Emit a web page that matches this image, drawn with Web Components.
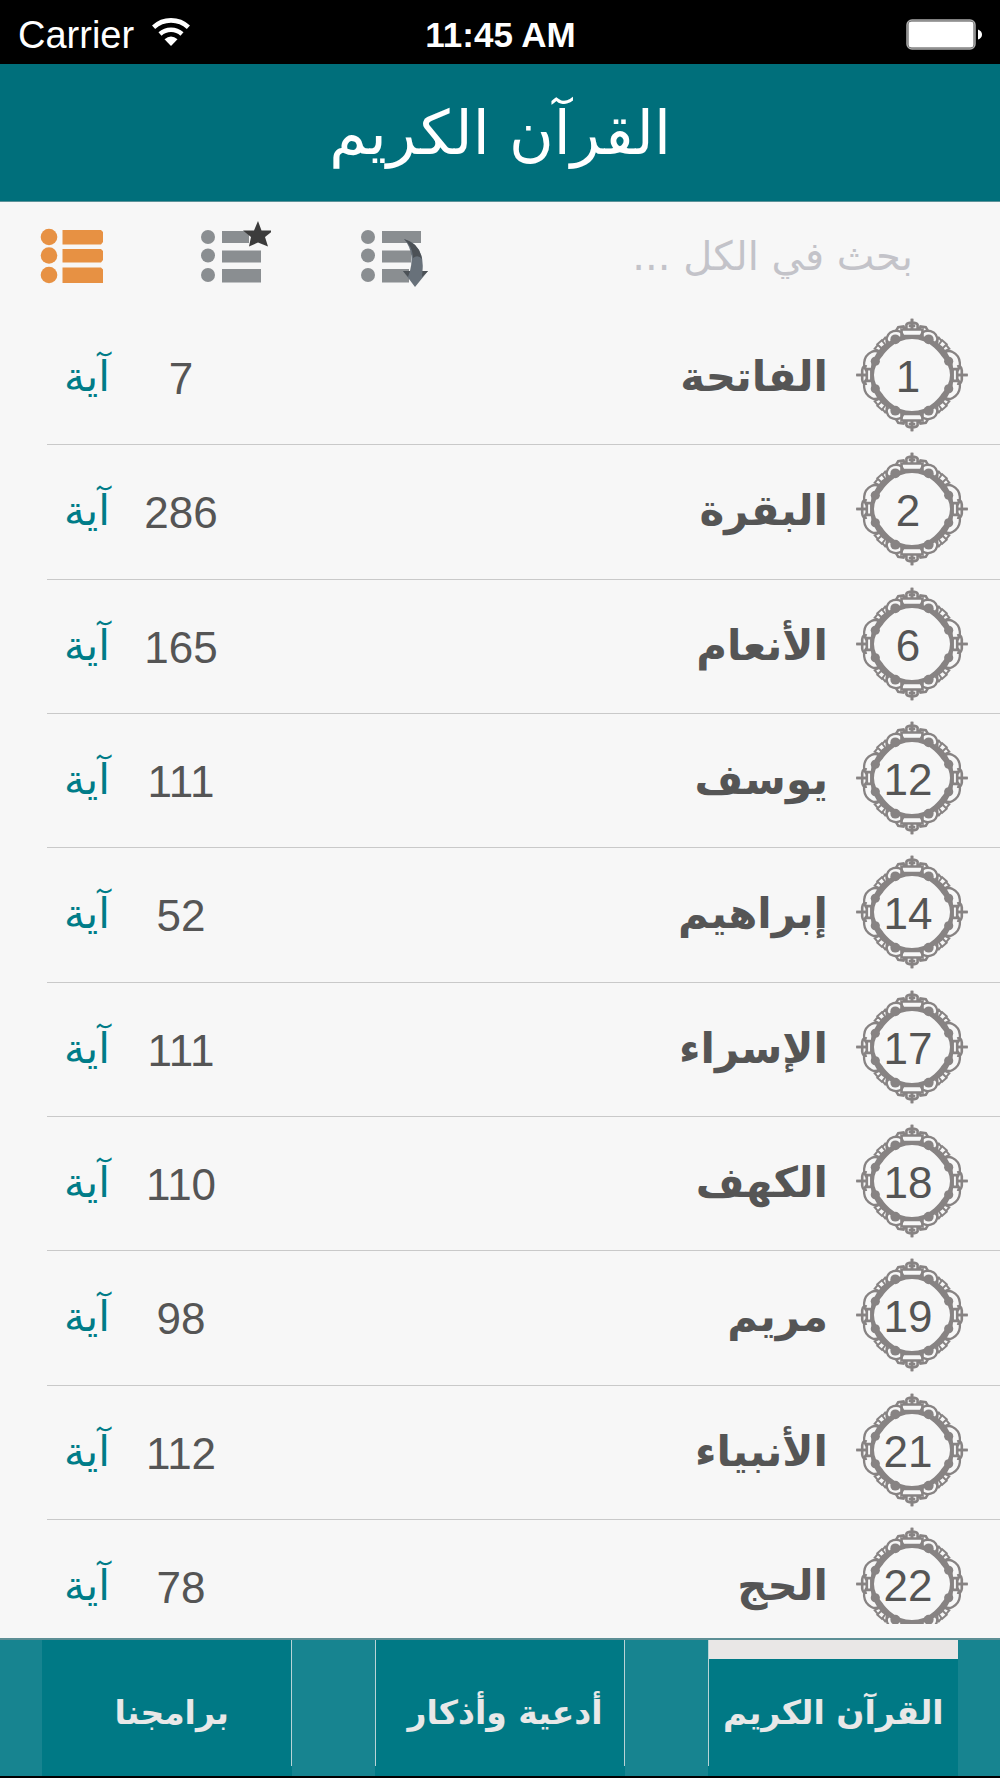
<!DOCTYPE html>
<html lang="ar" dir="rtl">
<head>
<meta charset="utf-8">
<meta name="viewport" content="width=device-width, initial-scale=1">
<title>القرآن الكريم</title>
<style>
  html, body { margin: 0; height: 100%; background: #f7f7f7; }
  body { font-family: "Liberation Sans", "DejaVu Sans", sans-serif; color: #555; }
</style>
</head>
<body>
<quran-app></quran-app>

<template id="app-tpl">
  <style>
    :host { display: grid; grid-template-rows: 64px 138px 109px minmax(0, 1fr) auto; min-height: 100vh; box-sizing: border-box; }
  </style>
  <status-bar carrier="Carrier" time="11:45 AM"></status-bar>
  <title-bar>القرآن الكريم</title-bar>
  <tool-bar></tool-bar>
  <sura-list></sura-list>
  <tab-bar>
    <tab-item edge="left" active>القرآن الكريم</tab-item>
    <tab-item edge="both">أدعية وأذكار</tab-item>
    <tab-item edge="right">برامجنا</tab-item>
  </tab-bar>
</template>

<template id="status-tpl">
  <style>
    :host { display: grid; grid-template-columns: 1fr auto 1fr; align-items: center; direction: ltr; background: #000; color: #fff; padding: 5px 17px 0 18px; }
    .left { display: flex; align-items: center; gap: 18px; font-size: 38px; line-height: 44px; }
    .time { font-size: 35px; line-height: 44px; font-weight: bold; }
    .battery { justify-self: end; }
    svg { display: block; }
    .wifi { margin-bottom: 6px; }
  </style>
  <div class="left"><span class="carrier"></span>
    <svg class="wifi" width="38" height="28" viewBox="0 0 38 28" fill="none" stroke="#fff" stroke-width="4.6">
      <path d="M1.600 9.200 A25.500 25.500 0 0 1 36.400 9.200"/>
      <path d="M8 16 A16.500 16.500 0 0 1 30 16"/>
      <path d="M12.500 21.200 Q19 16 25.500 21.200 L19 28 Z" fill="#fff" stroke="none"/>
    </svg>
  </div>
  <span class="time"></span>
  <svg class="battery" width="77" height="32" viewBox="0 0 77 32">
    <rect x="1" y="1" width="68" height="29" rx="5" fill="#444" stroke="#aaa" stroke-width="1.500"/>
    <rect x="2.500" y="2.500" width="65" height="26" rx="3" fill="#fff"/>
    <path d="M72 10.500 Q76 12 76 15.500 Q76 19 72 20.500 Z" fill="#fff"/>
  </svg>
</template>

<template id="title-tpl">
  <style>
    :host { display: flex; align-items: center; justify-content: center; box-sizing: border-box; background: #006f7b; color: #fff; border-bottom: 1px solid #5c9299; }
    h1 { margin: 0; font: 400 61px/80px "DejaVu Sans", sans-serif; }
  </style>
  <h1><slot></slot></h1>
</template>

<template id="tools-tpl">
  <style>
    :host { display: flex; align-items: center; justify-content: space-between; padding: 0 87px 6px 39px; }
    input { width: 400px; border: 0; padding: 4px 0 0; background: none; outline: 0; color: #555; font: 400 40px/60px "DejaVu Sans", sans-serif; }
    input::placeholder { color: #c3c3c9; opacity: 1; }
    .buttons { display: flex; direction: ltr; gap: 88px; }
    button { border: 0; padding: 0; background: none; width: 72px; height: 72px; }
    svg { display: block; }
  </style>
  <input type="search" aria-label="بحث" placeholder="بحث في الكل ...">
  <div class="buttons">
    <button type="button" aria-label="الكل">
      <svg width="72" height="72" viewBox="0 0 72 72" fill="#e79143">
        <circle cx="10" cy="19" r="8.300"/><circle cx="10" cy="37.500" r="8.300"/><circle cx="10" cy="57" r="8.300"/>
        <path d="M23.500 12H62l2 2V24l-2 2.500H23.500zM23.500 31H62l2 2V42l-2 2.500H23.500zM23.500 49.500H62l2 2V65H23.500z"/>
      </svg>
    </button>
    <button type="button" aria-label="المفضلة">
      <svg width="72" height="72" viewBox="0 0 72 72" fill="#8a8e91">
        <circle cx="9" cy="19" r="7"/><circle cx="9" cy="37.500" r="7"/><circle cx="9" cy="57" r="7"/>
        <path d="M23 13H50V25H23zM23 32.500H62V44.500H23zM23 51H62V64.500H23z"/>
        <path fill="#3c3c3c" d="M59 3 62.500 12.500H74L66 19 69 28.500 59 24.500 50 28.500 52 19 44 12.500H55z"/>
      </svg>
    </button>
    <button type="button" aria-label="الانتقال">
      <svg width="72" height="72" viewBox="0 0 72 72" fill="#8a8e91">
        <circle cx="9" cy="19" r="7"/><circle cx="9" cy="37.500" r="7"/><circle cx="9" cy="57" r="7"/>
        <path d="M23 13H62V25H23zM23 32.500H52V44.500H23zM23 51H50V64.500H23z"/>
        <path fill="#68717a" d="M45 21Q56 34 51 53H44L56 69 69 53H63.500Q66 27 45 21z"/>
        <path fill="#4c5156" d="M45 21Q54 29 54 40 59 36 63 41 60 25 45 21zM44 53H51L49 59zM69 53H63.500L63 59z"/>
      </svg>
    </button>
  </div>
</template>

<template id="list-tpl">
  <style>
    :host { display: block; min-height: 0; }
    ol { list-style: none; margin: 0; padding: 0; height: 100%; display: grid; grid-template-rows: repeat(9, minmax(0, 1fr)) 118px; }
    li { display: grid; min-height: 0; overflow: hidden; }
  </style>
  <ol></ol>
</template>

<template id="row-tpl">
  <style>
    :host { display: grid; align-items: start; grid-template-columns: 114px minmax(0, 1fr) 94px 94px; padding: 0 31px 0 40px; box-sizing: border-box; position: relative; overflow: hidden; }
    :host(:not([last]))::after { content: ""; position: absolute; left: 47px; right: 0; bottom: 0; height: 1px; background: #c9c9c9; }
    :host([last]) { margin-bottom: 14px; }
    .badge { display: grid; margin-top: 6px; }
    .badge > * { grid-area: 1 / 1; }
    svg { display: block; }
    .no, .count { font-size: 44px; line-height: 50px; text-align: center; direction: ltr; }
    .no { align-self: center; padding: 4px 8px 0 0; }
    .count { margin-top: 43px; }
    .name, .unit { font-family: "DejaVu Sans", sans-serif; line-height: 64px; margin-top: 34px; }
    .name { margin-right: 27px; font-size: 42px; font-weight: 700; white-space: nowrap; }
    .unit { color: #007c88; font-size: 42px; text-align: center; }
  </style>
  <div class="badge">
    <svg width="114" height="116" viewBox="-174 -174 348 348" fill="none" stroke="#878383" stroke-width="7" aria-hidden="true">
      <defs>
        <g id="q">
          <path fill="#878383" stroke="none" d="M-126 0Q-126 -30 -122 -42Q-108 -70 -92 -88Q-62 -108 -46 -116Q-24 -120 0 -120V-110Q-38 -110 -67 -84Q-84 -68 -90 -58Q-116 -30 -116 0z"/>
          <circle cx="-112" cy="-42" r="14" fill="#878383" stroke="none"/>
          <circle cx="-51" cy="-109" r="15" fill="#878383" stroke="none"/>
          <path d="M-92 -60Q-106 -80 -124 -70Q-144 -60 -146 -38Q-148 -20 -136 -10M-76 -92Q-82 -118 -66 -130Q-48 -140 -32 -130L-26 -118"/>
          <path d="M-80 -90 -92 -106 -106 -94 -92 -80M-98 -72 -114 -80 -104 -92M-90 -104 -82 -114 -72 -100" stroke-width="6"/>
          <path d="M0 -139H-32V-119H0M-48 -136 -42 -146 -26 -148 -22 -138M-17 -140V-154Q-14 -160 0 -160M0 -172V-140M-10 -150H0" stroke-width="8"/>
          <path d="M-124 0V-18H-138V0M-138 -26Q-150 -30 -152 -14V0M-170 0H-138" stroke-width="8"/>
        </g>
      </defs>
      <use href="#q"/><use href="#q" transform="scale(-1 1)"/><use href="#q" transform="scale(1 -1)"/><use href="#q" transform="scale(-1 -1)"/>
    </svg>
    <span class="no"></span>
  </div>
  <span class="name"></span>
  <span class="count"></span>
  <span class="unit">آية</span>
</template>

<template id="tabs-tpl">
  <style>
    :host { display: block; background: #178490; border-top: 2px solid #5d8f95; border-bottom: 2px solid #000; box-sizing: border-box; height: 140px; }
    nav { display: flex; justify-content: space-around; height: 100%; }
  </style>
  <nav><slot></slot></nav>
</template>

<template id="tab-tpl">
  <style>
    :host { display: block; width: 25%; height: 100%; }
    button { display: grid; grid-template-rows: 19px 1fr 10px; width: 100%; height: 100%; border: 0; padding: 0; background: #007985; color: #e8e8e8; font: 700 33px/48px "DejaVu Sans", sans-serif; }
    .mark { grid-area: 1 / 1; }
    .text { grid-area: 2 / 1; display: flex; align-items: center; justify-content: center; white-space: nowrap; }
    :host(:not([active])) .text { padding-left: 10px; }
    .side { grid-area: 1 / 1 / 3 / 2; box-sizing: border-box; }
    :host([active]) .mark { background: #e9e7e6; }
    :host([edge="left"]) .side, :host([edge="both"]) .side { border-left: 1px solid #b9d3d6; }
    :host([edge="right"]) .side, :host([edge="both"]) .side { border-right: 1px solid #b9d3d6; }
  </style>
  <button type="button"><span class="mark"></span><span class="side"></span><span class="text"><slot></slot></span></button>
</template>

<script>
  class TemplateElement extends HTMLElement {
    constructor() {
      super();
      const tpl = document.getElementById(this.constructor.template);
      this.attachShadow({ mode: "open" }).append(tpl.content.cloneNode(true));
    }
    $(selector) { return this.shadowRoot.querySelector(selector); }
  }

  class StatusBar extends TemplateElement {
    static template = "status-tpl";
    connectedCallback() {
      this.$(".carrier").textContent = this.getAttribute("carrier");
      this.$(".time").textContent = this.getAttribute("time");
    }
  }
  class TitleBar extends TemplateElement { static template = "title-tpl"; }
  class ToolBar extends TemplateElement { static template = "tools-tpl"; }
  class TabBar extends TemplateElement { static template = "tabs-tpl"; }
  class TabItem extends TemplateElement { static template = "tab-tpl"; }

  class SuraRow extends TemplateElement {
    static template = "row-tpl";
    connectedCallback() {
      this.$(".no").textContent = this.getAttribute("number");
      this.$(".name").textContent = this.getAttribute("name");
      this.$(".count").textContent = this.getAttribute("count");
    }
  }

  const SURAS = [
    [1, "الفاتحة", 7], [2, "البقرة", 286], [6, "الأنعام", 165], [12, "يوسف", 111],
    [14, "إبراهيم", 52], [17, "الإسراء", 111], [18, "الكهف", 110], [19, "مريم", 98],
    [21, "الأنبياء", 112], [22, "الحج", 78]
  ];

  class SuraList extends TemplateElement {
    static template = "list-tpl";
    connectedCallback() {
      const list = this.$("ol");
      SURAS.forEach(([number, name, count], i) => {
        const li = document.createElement("li");
        const row = document.createElement("sura-row");
        row.setAttribute("number", number);
        row.setAttribute("name", name);
        row.setAttribute("count", count);
        row.toggleAttribute("last", i === SURAS.length - 1);
        li.append(row);
        list.append(li);
      });
    }
  }

  class QuranApp extends TemplateElement { static template = "app-tpl"; }

  customElements.define("status-bar", StatusBar);
  customElements.define("title-bar", TitleBar);
  customElements.define("tool-bar", ToolBar);
  customElements.define("tab-item", TabItem);
  customElements.define("tab-bar", TabBar);
  customElements.define("sura-row", SuraRow);
  customElements.define("sura-list", SuraList);
  customElements.define("quran-app", QuranApp);
</script>
</body>
</html>
